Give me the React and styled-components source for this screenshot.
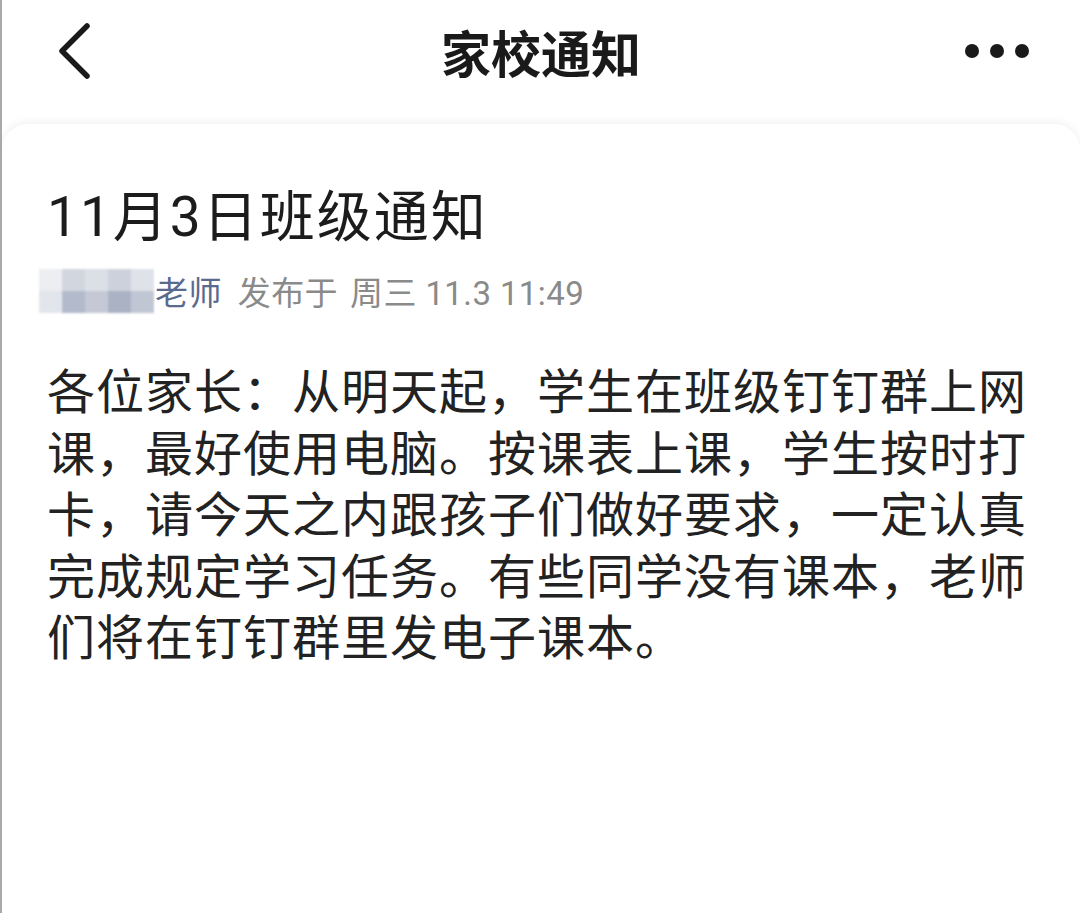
import React from "react";
import styled, { createGlobalStyle } from "styled-components";

const GlobalStyle = createGlobalStyle`
  html, body {
    margin: 0;
    padding: 0;
    background: #fff;
  }
  body {
    font-family: "Noto Sans CJK SC", "Noto Sans", sans-serif;
    color: #1f1f1f;
  }
`;

const Page = styled.div`
  height: 913px;
  box-sizing: border-box;
  border-left: 2px solid #a9a9a9;
  overflow: hidden;
  background: #fff;
  display: flex;
  flex-direction: column;
`;

const Header = styled.header`
  height: 104px;
  flex: none;
  display: grid;
  grid-template-columns: 200px 1fr 200px;
  align-items: center;
`;

const BackButton = styled.button`
  justify-self: start;
  margin-left: 52px;
  margin-top: -4px;
  background: none;
  border: 0;
  padding: 0;
  display: flex;
`;

const HeaderTitle = styled.h1`
  margin: 0;
  text-align: center;
  font-size: 50px;
  font-weight: 700;
  color: #1a1a1a;
  line-height: 1;
  margin-top: -2px;
`;

const MoreButton = styled.button`
  justify-self: end;
  margin-right: 51px;
  margin-top: -2px;
  background: none;
  border: 0;
  padding: 0;
  display: flex;
  gap: 11px;
`;

const Dot = styled.span`
  width: 14px;
  height: 14px;
  border-radius: 50%;
  background: #1a1a1a;
`;

const Card = styled.main`
  flex: 1;
  margin-top: 20px;
  background: #fff;
  border-radius: 26px 26px 0 0;
  box-shadow: 0 -3px 8px rgba(0, 0, 0, 0.05);
  padding: 58px 40px 0 45px;
`;

const NoticeTitle = styled.h2`
  margin: 0;
  font-family: Roboto, "Noto Sans CJK SC", sans-serif;
  font-size: 55px;
  font-weight: 400;
  letter-spacing: 2px;
  line-height: 70px;
  color: #1c1c1c;
`;

const Meta = styled.div`
  margin-top: 13px;
  margin-left: -10px;
  display: flex;
  align-items: center;
  height: 52px;
  font-family: Roboto, "Noto Sans CJK SC", sans-serif;
  font-size: 33px;
  letter-spacing: 0.4px;
  color: #8a8a8a;
`;

const Teacher = styled.span`
  color: #5a6a8c;
  margin-right: 16px;
`;

const MetaPart = styled.span`
  margin-right: ${(p) => (p.$gap ? "12px" : "0")};
`;

const BodyText = styled.p`
  margin: 41px 0 0 0;
  width: 984px;
  font-size: 48px;
  letter-spacing: 1px;
  line-height: 61.5px;
  color: #222;
`;

const mosaic = [
  ["#eceef2", "#d2d6df", "#dcdfe6", "#cdd1db", "#dfe2e8"],
  ["#e2e5eb", "#b3bacb", "#c4c9d5", "#aab2c4", "#c0c6d3"],
];

function BlurredName() {
  return (
    <svg width="118" height="52" viewBox="0 0 118 52">
      <defs>
        <filter id="soft">
          <feGaussianBlur stdDeviation="1.2" />
        </filter>
      </defs>
      <g filter="url(#soft)">
        {mosaic.map((row, r) =>
          row.map((c, i) => (
            <rect key={`${r}-${i}`} x={2 + i * 23} y={4 + r * 22} width="23" height="22" fill={c} />
          ))
        )}
      </g>
    </svg>
  );
}

export default function App() {
  return (
    <>
      <GlobalStyle />
      <Page>
        <Header>
          <BackButton aria-label="返回">
            <svg width="40" height="60" viewBox="0 0 40 60">
              <path d="M33 6 L8 31 L33 56" fill="none" stroke="#1a1a1a" strokeWidth="5.5" strokeLinecap="round" strokeLinejoin="round" />
            </svg>
          </BackButton>
          <HeaderTitle>家校通知</HeaderTitle>
          <MoreButton aria-label="更多">
            <Dot />
            <Dot />
            <Dot />
          </MoreButton>
        </Header>
        <Card>
          <NoticeTitle>11月3日班级通知</NoticeTitle>
          <Meta>
            <BlurredName />
            <Teacher>老师</Teacher>
            <MetaPart $gap>发布于</MetaPart>
            <MetaPart>周三 11.3 11:49</MetaPart>
          </Meta>
          <BodyText>
            各位家长：从明天起，学生在班级钉钉群上网课，最好使用电脑。按课表上课，学生按时打卡，请今天之内跟孩子们做好要求，一定认真完成规定学习任务。有些同学没有课本，老师们将在钉钉群里发电子课本。
          </BodyText>
        </Card>
      </Page>
    </>
  );
}
